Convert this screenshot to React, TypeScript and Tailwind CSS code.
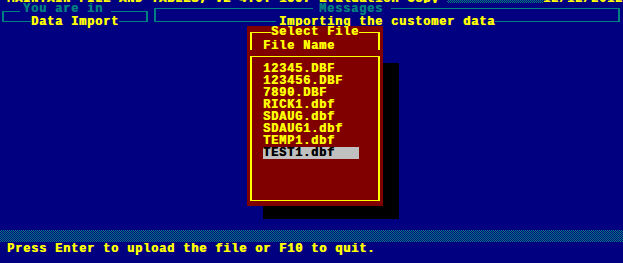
import React from "react";

const files = [
  "12345.DBF",
  "123456.DBF",
  "7890.DBF",
  "RICK1.dbf",
  "SDAUG.dbf",
  "SDAUG1.dbf",
  "TEMP1.dbf",
  "TEST1.dbf",
];

const dither =
  "bg-[image:repeating-conic-gradient(#008080_0%_25%,#000080_0%_50%)] bg-[length:2px_2px]";

const App = () => {
  return (
    <div className="relative h-[263px] w-[623px] overflow-hidden bg-[#000080] font-['Liberation_Mono',monospace] text-[12px] font-bold leading-[12px] tracking-[0.8px] whitespace-pre text-[#ffff00] [text-shadow:0.6px_0_0_currentColor]">
      {/* title line, mostly scrolled off the top */}
      <div className="flex h-[3px] items-end overflow-hidden">
        <span className="-mb-[2px] w-[447px] pl-[7px]">
          MAINTAIN FILE AND TABLES, V2 4.0: 1997 Evaluation Copy
        </span>
        <span className={`h-[3px] w-[96px] self-start ${dither}`} />
        <span className="-mb-[2px]">12/12/2012</span>
      </div>

      {/* status boxes */}
      <div className="flex h-[19px] items-end">
        <div className="relative ml-[2px] h-[11px] w-[146px] border-x-2 border-y border-[#008080]">
          <span className="absolute top-[-9px] left-[16px] bg-[#000080] pr-[8px] pl-[3px] text-[#008080]">
            You are in
          </span>
          <span className="absolute top-[4px] left-[27px] bg-[#000080]">
            Data Import
          </span>
        </div>
        <div className="relative ml-[6px] h-[14px] w-[466px] border-x-2 border-y border-[#008080]">
          <span className="absolute top-[-6px] left-[157px] bg-[#000080] pr-[8px] pl-[6px] text-[#008080]">
            Messages
          </span>
          <span className="absolute top-[7px] left-[120px] bg-[#000080] pl-[3px]">
            Importing the customer data
          </span>
        </div>
      </div>

      <div className="h-[208px]" />
      <div className={`h-[12px] ${dither}`} />
      <div className="mt-[1px] h-[12px] pl-[7px]">
        Press Enter to upload the file or F10 to quit.
      </div>

      {/* file picker dialog with its shadow */}
      <div className="absolute top-[63px] left-[263px] h-[156px] w-[136px] bg-black" />
      <div className="absolute top-[26px] left-[247px] flex h-[180px] w-[136px] flex-col gap-[6px] bg-[#800000] px-[3px] pt-[6px]">
        <div className="relative h-[18px] border-x-2 border-t border-[#ffff00] pt-[7px] pl-[11px]">
          <span className="absolute top-[-7px] left-[19px] bg-[#800000]">
            Select File
          </span>
          File Name
        </div>
        <div className="flex h-[145px] flex-col border-x-2 border-y border-[#ffff00] pt-[6px] pl-[11px]">
          {files.map((f, i) => (
            <div key={f} className="h-[12px]">
              <span
                className={
                  i === files.length - 1
                    ? "inline-block w-[96px] bg-[#c0c0c0] text-black"
                    : ""
                }
              >
                {f}
              </span>
            </div>
          ))}
        </div>
      </div>
    </div>
  );
};

export default App;
